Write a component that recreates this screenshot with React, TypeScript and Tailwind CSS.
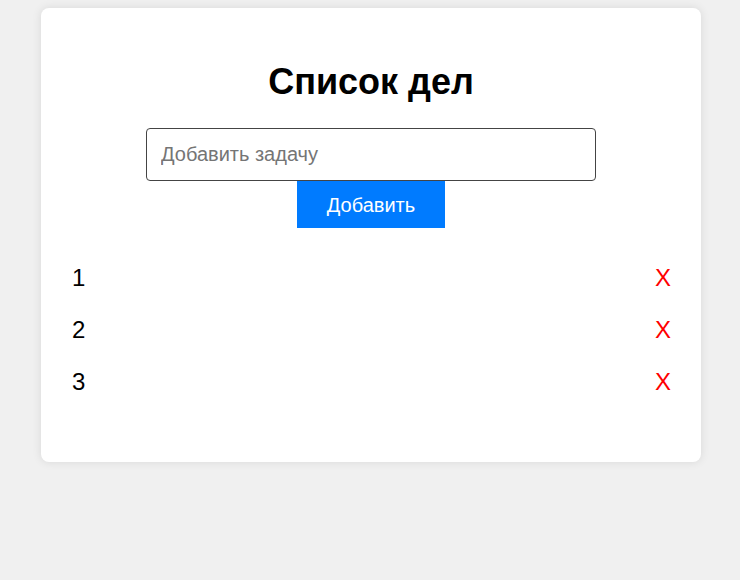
import { useState } from "react";

export default function App() {
  const [tasks, setTasks] = useState<string[]>(["1", "2", "3"]);
  const [text, setText] = useState("");

  const addTask = () => {
    if (!text.trim()) return;
    setTasks([...tasks, text.trim()]);
    setText("");
  };

  const removeTask = (i: number) => {
    setTasks(tasks.filter((_, idx) => idx !== i));
  };

  return (
    <div
      className="min-h-[580px] bg-[#f0f0f0] pt-2"
      style={{ fontFamily: "'Liberation Sans', Arial, sans-serif" }}
    >
      <div className="ml-[41px] w-[660px] rounded-lg bg-white px-[30px] pt-[30px] pb-[54px] shadow-[0_0_10px_rgba(0,0,0,0.1)]">
        <h1 className="mt-[23px] mb-[26px] text-center text-[36px] font-bold leading-[41px] text-black">
          Список дел
        </h1>

        <div className="flex flex-col items-center">
          <input
            value={text}
            onChange={(e) => setText(e.target.value)}
            placeholder="Добавить задачу"
            className="h-[53px] w-[450px] rounded border border-[#444] px-[14px] text-[20px] text-black outline-none placeholder:text-[#757575]"
          />
          <button
            onClick={addTask}
            className="h-[47px] w-[148px] bg-[#007bff] text-[20px] text-white"
          >
            Добавить
          </button>
        </div>

        <ul className="mt-6">
          {tasks.map((t, i) => (
            <li
              key={i}
              className="flex h-[52px] items-center justify-between pl-[1px] text-[24px] text-black"
            >
              <span>{t}</span>
              <button onClick={() => removeTask(i)} className="text-[24px] text-[#ff0000]">
                X
              </button>
            </li>
          ))}
        </ul>
      </div>
    </div>
  );
}
